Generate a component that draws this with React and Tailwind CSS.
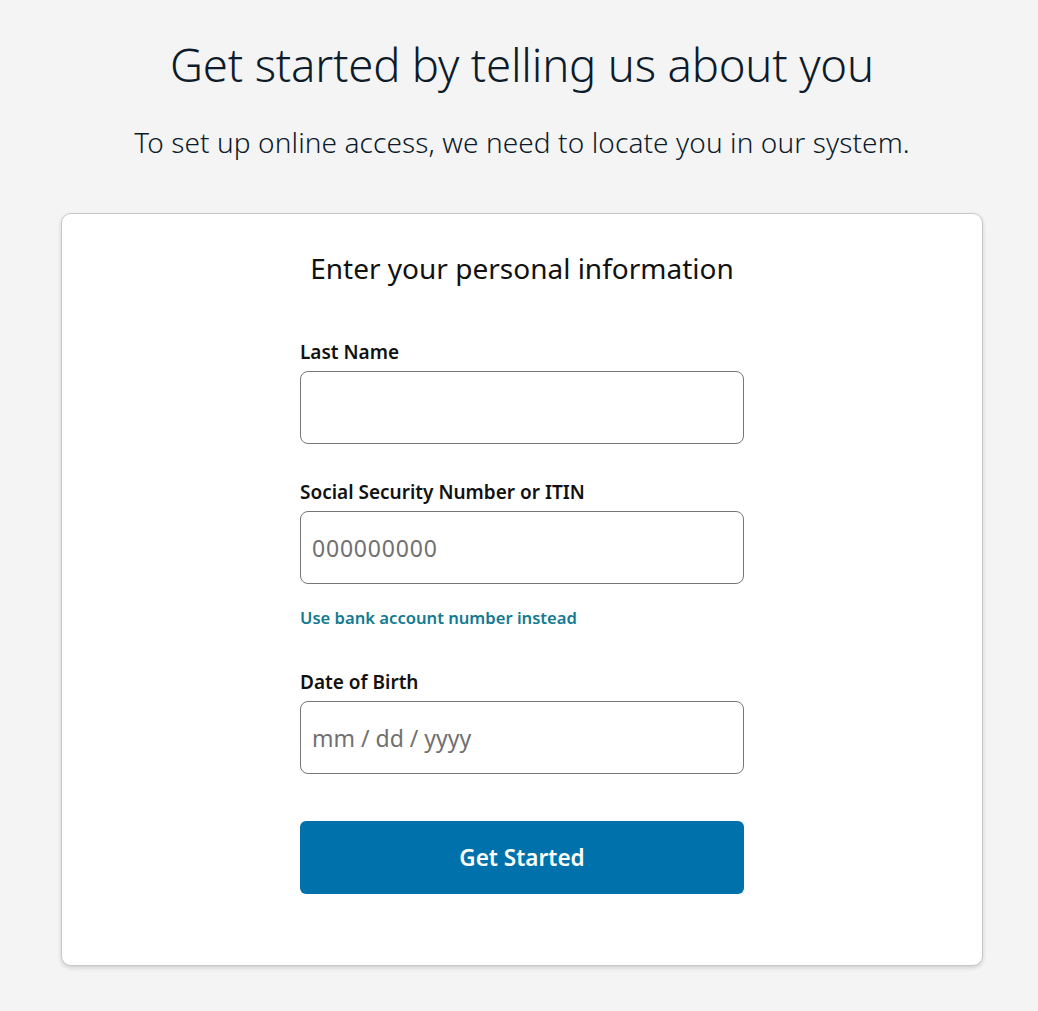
export default function App() {
  const font = { fontFamily: '"Noto Sans", "Open Sans", Arial, sans-serif' };
  return (
    <div className="min-h-[1011px] bg-[#f4f4f4] pt-[35px] pb-[45px] pl-[6px]" style={font}>
      <h1 className="text-center text-[45.5px] leading-[58px] font-light text-[#0d1b2a] tracking-[-0.2px]">
        Get started by telling us about you
      </h1>
      <p className="mt-[31px] text-center text-[28px] leading-[36px] font-light text-[#0d1b2a] tracking-[0.1px]">
        To set up online access, we need to locate you in our system.
      </p>
      <div className="ml-[55px] mr-[55px] mt-[53px] rounded-[10px] border border-[#c8c8c8] bg-white shadow-[0_2px_4px_rgba(0,0,0,0.15)] pt-[34px] pb-[71px]">
        <h2 className="text-center text-[28px] leading-[40px] text-[#111]">Enter your personal information</h2>
        <div className="mx-auto mt-[51px] w-[444px]">
          <label className="block text-[19px] leading-[26px] font-semibold text-[#111]">Last Name</label>
          <input className="mt-[6px] block h-[73px] w-full rounded-[8px] border border-[#767676] bg-white px-[11px] text-[23px] outline-none" />
          <label className="mt-[35px] block text-[19px] leading-[26px] font-semibold text-[#111]">Social Security Number or ITIN</label>
          <input placeholder="000000000" className="mt-[6px] block h-[73px] w-full rounded-[8px] border border-[#767676] bg-white px-[11px] text-[23px] tracking-[0.8px] outline-none placeholder:text-[#707070]" />
          <a className="mt-[22px] block text-[16.6px] leading-[24px] font-semibold text-[#137a91]" href="#">Use bank account number instead</a>
          <label className="mt-[39px] block text-[19px] leading-[26px] font-semibold text-[#111]">Date of Birth</label>
          <input placeholder="mm / dd / yyyy" className="mt-[6px] block h-[73px] w-full rounded-[8px] border border-[#767676] bg-white px-[11px] text-[23px] outline-none placeholder:text-[#707070]" />
          <button className="mt-[47px] block h-[73px] w-full rounded-[6px] bg-[#0071aa] text-[22.5px] font-semibold text-white">Get Started</button>
        </div>
      </div>
    </div>
  );
}
